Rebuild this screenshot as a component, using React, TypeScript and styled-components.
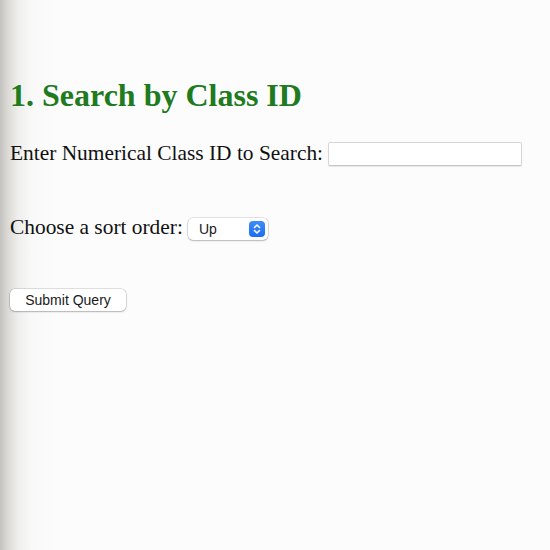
import React, { FC } from 'react';
import styled, { createGlobalStyle } from 'styled-components';

const GlobalStyle = createGlobalStyle`
  html, body {
    margin: 0;
    padding: 0;
    height: 100%;
  }
  body {
    background: linear-gradient(to right, #c4c2be 0px, #dcdad7 8px, #eeeeec 18px, #f9f9f9 32px, #fcfcfc 60px, #fcfcfc 100%);
    font-family: "Liberation Serif", "Times New Roman", serif;
  }
  #root {
    min-height: 100%;
  }
`;

const Page = styled.div`
  display: flex;
  flex-direction: column;
  padding: 77px 10px 0 10px;
  color: #111;
`;

const Heading = styled.h2`
  margin: 0 0 27px 0;
  color: #207a1e;
  font-size: 32px;
  font-weight: bold;
  line-height: 36px;
`;

const Row = styled.div<{ $after: number }>`
  display: flex;
  align-items: center;
  gap: 5px;
  font-size: 21.4px;
  line-height: 24px;
  margin-bottom: ${props => props.$after}px;
`;

const TextInput = styled.input`
  width: 194px;
  height: 24px;
  box-sizing: border-box;
  border: 1px solid #d6d6d6;
  border-bottom-color: #c4c4c4;
  border-radius: 2px;
  background: #fff;
  box-shadow: 0 1px 1px rgba(0, 0, 0, 0.08);
  margin-top: 2px;
`;

const SelectBox = styled.div`
  display: flex;
  align-items: center;
  justify-content: space-between;
  width: 80px;
  height: 22px;
  box-sizing: border-box;
  padding: 0 3px 0 11px;
  background: #fff;
  border-radius: 5px;
  box-shadow: 0 0 0 0.5px rgba(0, 0, 0, 0.2), 0 1px 2px rgba(0, 0, 0, 0.2);
  font-family: "Liberation Sans", Arial, sans-serif;
  font-size: 14px;
  color: #1a1a1a;
  margin-top: 4px;
`;

const Chevron = styled.span`
  display: flex;
  align-items: center;
  justify-content: center;
  width: 16px;
  height: 16px;
  border-radius: 4px;
  background: linear-gradient(#3f8df7, #1a6ef0);
`;

const SubmitButton = styled.button`
  align-self: flex-start;
  height: 22px;
  width: 116px;
  padding: 0;
  background: #fff;
  border: none;
  border-radius: 5px;
  box-shadow: 0 0 0 0.5px rgba(0, 0, 0, 0.22), 0 1px 2px rgba(0, 0, 0, 0.2);
  font-family: "Liberation Sans", Arial, sans-serif;
  font-size: 14px;
  color: #1a1a1a;
`;

const SortSelect: FC<{ value: string }> = ({ value }) => (
  <SelectBox>
    <span>{value}</span>
    <Chevron>
      <svg width="8" height="12" viewBox="0 0 8 12" fill="none" stroke="#fff" strokeWidth="1.6" strokeLinecap="round" strokeLinejoin="round">
        <path d="M1.5 4.5 L4 2 L6.5 4.5" />
        <path d="M1.5 7.5 L4 10 L6.5 7.5" />
      </svg>
    </Chevron>
  </SelectBox>
);

const App: FC = () => (
  <>
    <GlobalStyle />
    <Page>
      <Heading>1. Search by Class ID</Heading>
      <Row $after={48}>
        <span>Enter Numerical Class ID to Search:</span>
        <TextInput type="text" />
      </Row>
      <Row $after={49}>
        <span>Choose a sort order:</span>
        <SortSelect value="Up" />
      </Row>
      <SubmitButton>Submit Query</SubmitButton>
    </Page>
  </>
);

export default App;
